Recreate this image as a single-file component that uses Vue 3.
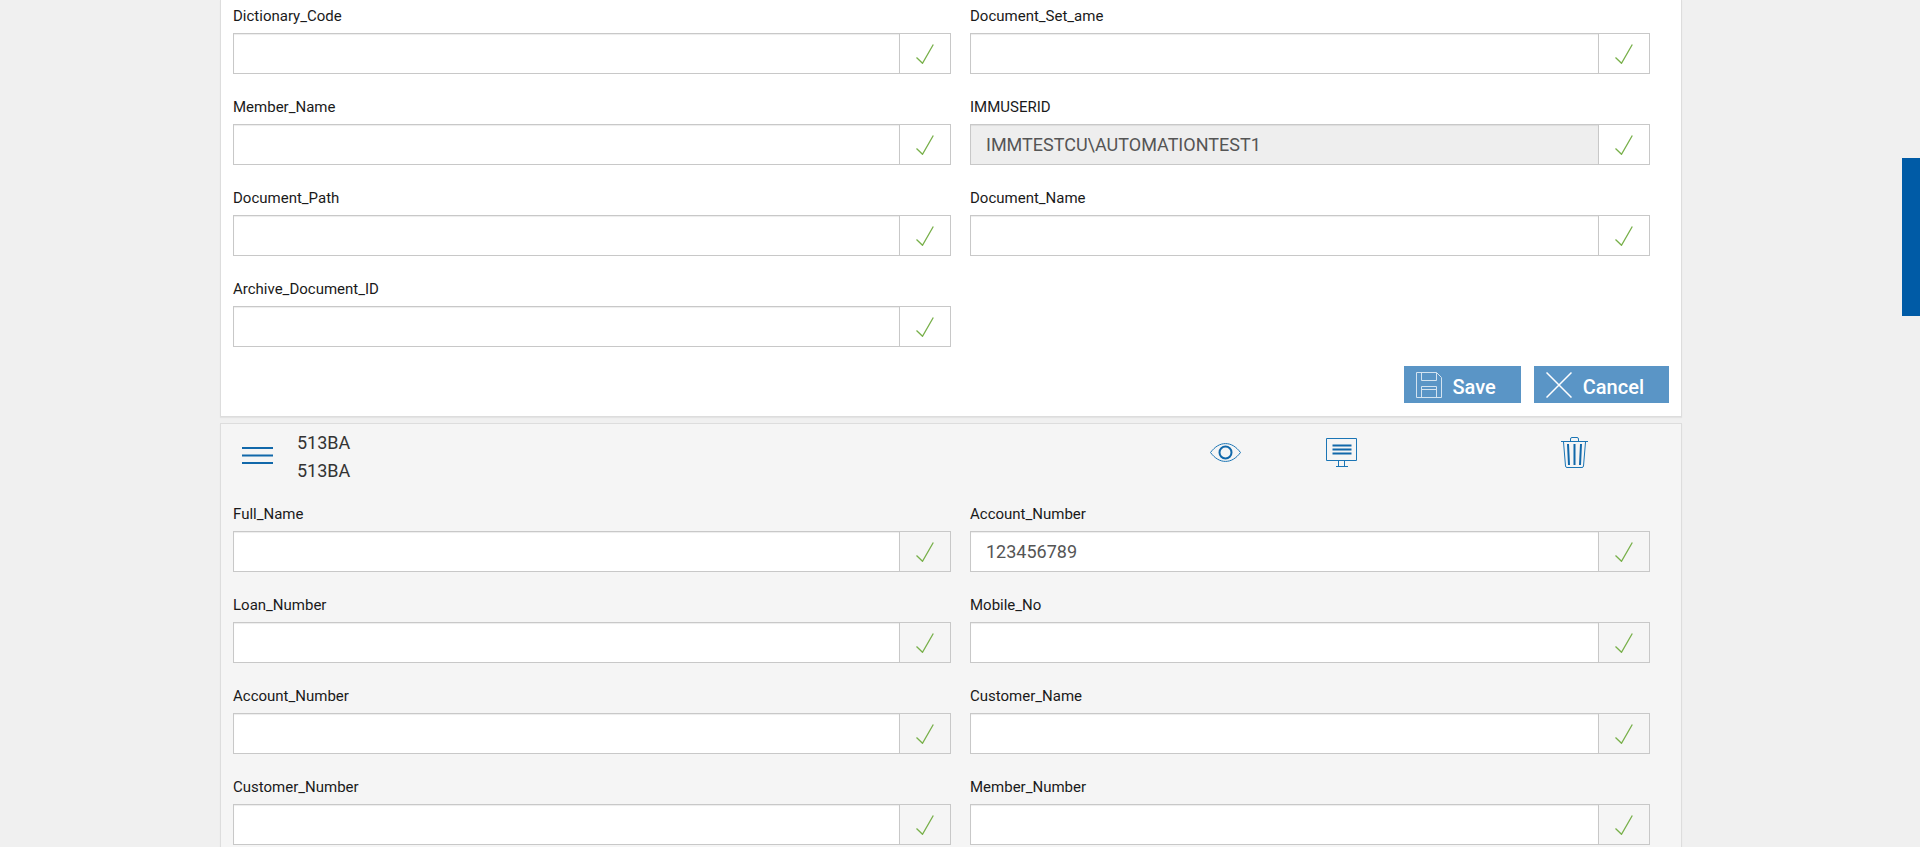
<script setup>
import { reactive } from 'vue'

const field = (id, label, value = '', readonly = false) => ({ id, label, value, readonly })

const openFields = reactive([
  field('dictionary-code', 'Dictionary_Code'),
  field('document-set', 'Document_Set_ame'),
  field('member-name', 'Member_Name'),
  field('imm-user-id', 'IMMUSERID', 'IMMTESTCU\\AUTOMATIONTEST1', true),
  field('document-path', 'Document_Path'),
  field('document-name', 'Document_Name'),
  field('archive-id', 'Archive_Document_ID'),
])

const nextFields = reactive([
  field('full-name', 'Full_Name'),
  field('account-number', 'Account_Number', '123456789'),
  field('loan-number', 'Loan_Number'),
  field('mobile-no', 'Mobile_No'),
  field('account-number-2', 'Account_Number'),
  field('customer-name', 'Customer_Name'),
  field('customer-number', 'Customer_Number'),
  field('member-number', 'Member_Number'),
])
</script>

<template>
  <main class="page">
    <section class="panel panel-open">
      <div class="fields">
        <div v-for="f in openFields" :key="f.id" class="field">
          <label :for="f.id">{{ f.label }}</label>
          <div class="group">
            <input :id="f.id" v-model="f.value" type="text" :readonly="f.readonly" />
            <span class="addon">
              <svg width="18" height="20" viewBox="0 0 18 20"><path d="M.5 13.5 6.5 19.3 17.3.5" /></svg>
            </span>
          </div>
        </div>
      </div>
      <div class="actions">
        <button type="button" class="btn">
          <svg width="26" height="26" viewBox="0 0 26 26">
            <path d="M.5.5H20.5L25.5 5.5V25.5H.5ZM5.5.5V8.5H20.5V.5M5.5 25.5V14.5H20.5V25.5M6 17.5H20" />
          </svg>
          <span>Save</span>
        </button>
        <button type="button" class="btn">
          <svg width="26" height="26" viewBox="0 0 26 26"><path class="cross" d="M.5.5 25.5 25.5M25.5.5.5 25.5" /></svg>
          <span>Cancel</span>
        </button>
      </div>
    </section>

    <section class="panel panel-next">
      <header class="head">
        <button type="button" class="icon-btn handle" aria-label="Reorder">
          <svg width="31" height="17" viewBox="0 0 31 17">
            <path class="bar" d="M0 1H31M0 8.5H31M0 16H31" />
          </svg>
        </button>
        <div class="title">
          <div>513BA</div>
          <div>513BA</div>
        </div>
        <div class="tools">
          <button type="button" class="icon-btn" aria-label="Preview">
            <svg width="31" height="32" viewBox="0 0 31 32">
              <path d="M.5 15.5C5 9.5 10 6.6 15.5 6.6S26 9.5 30.5 15.5C26 21.5 21 24.4 15.5 24.4S5 21.5.5 15.5Z" />
              <circle class="bold" cx="15.5" cy="15.5" r="6" />
            </svg>
          </button>
          <button type="button" class="icon-btn" aria-label="Present">
            <svg width="31" height="32" viewBox="0 0 31 32">
              <path d="M.5 1.5H30.5V23.5H.5ZM12.5 23.5V29M18.5 23.5V29M10 29.5H22" />
              <path class="bold" d="M6.5 8.5H25.5M6.5 12.5H25.5M6.5 16.5H25.5" />
            </svg>
          </button>
          <button type="button" class="icon-btn" aria-label="Delete">
            <svg width="27" height="32" viewBox="0 0 27 32">
              <path d="M0 4.5H27M9.5 4.5V2Q9.5 .5 11 .5H16Q17.5 .5 17.5 2V4.5M2.5 5 4.5 29Q4.7 30.5 6 30.5H21Q22.3 30.5 22.5 29L24.5 5" />
              <path class="bold" d="M7 7 8 28M13.5 7V28M20 7 19 28" />
            </svg>
          </button>
        </div>
      </header>
      <div class="fields">
        <div v-for="f in nextFields" :key="f.id" class="field">
          <label :for="f.id">{{ f.label }}</label>
          <div class="group">
            <input :id="f.id" v-model="f.value" type="text" :readonly="f.readonly" />
            <span class="addon">
              <svg width="18" height="20" viewBox="0 0 18 20"><path d="M.5 13.5 6.5 19.3 17.3.5" /></svg>
            </span>
          </div>
        </div>
      </div>
    </section>

    <button type="button" class="side-tab" aria-label="Open side panel"></button>
  </main>
</template>

<style>
body {
  margin: 0;
  background: #f0f0f0;
}
</style>

<style scoped>
* {
  box-sizing: border-box;
}
.page {
  display: flex;
  flex-direction: column;
  gap: 6px;
  min-height: 100vh;
  padding: 0 238px 0 220px;
  background: #f0f0f0;
  color: #1a1a1a;
  font-family: Roboto, "Liberation Sans", sans-serif;
}
.panel {
  border: 1px solid #ddd;
  box-shadow: 0 1px 1px rgba(0, 0, 0, 0.05);
}
.panel-open {
  border-top: 0;
  padding: 6px 0 13px;
  background: #fff;
}
.panel-next {
  flex: 1;
  border-bottom: 0;
  background: #f5f5f5;
}
.fields {
  display: grid;
  grid-template-columns: 718fr 680fr;
  gap: 23px 19px;
  padding: 0 31px 0 12px;
}
label {
  display: block;
  margin-bottom: 7px;
  font-size: 15px;
  line-height: 20px;
}
.group {
  display: flex;
  height: 41px;
}
input {
  flex: 1;
  min-width: 0;
  padding: 0 15px;
  border: 1px solid #c8c8c8;
  border-right: 0;
  border-radius: 0;
  outline: 0;
  background: #fff;
  box-shadow: inset 0 1px 1px rgba(0, 0, 0, 0.075);
  color: #555;
  font: 18px Roboto, "Liberation Sans", sans-serif;
}
input[readonly] {
  background: #eee;
}
.addon {
  display: flex;
  align-items: center;
  justify-content: center;
  width: 52px;
  border: 1px solid #c8c8c8;
}
svg {
  display: block;
  fill: none;
}
.addon path {
  stroke: #78b04a;
  stroke-width: 1.3;
}
.actions {
  display: flex;
  justify-content: flex-end;
  gap: 13px;
  margin-top: 19px;
  padding-right: 12px;
}
.btn {
  display: flex;
  align-items: flex-start;
  gap: 11px;
  height: 37px;
  padding: 6px 25px 0 12px;
  border: 0;
  background: #5a95c6;
  color: #fff;
  font: 500 20px/30px Roboto, "Liberation Sans", sans-serif;
}
.btn path {
  stroke: #d3e3f0;
}
.btn .cross {
  stroke: #fff;
  stroke-width: 1.5;
}
.head {
  display: flex;
  align-items: flex-start;
  padding: 5px 0 19px 21px;
}
.icon-btn {
  padding: 0;
  border: 0;
  background: none;
}
.icon-btn path,
.icon-btn circle {
  stroke: #1b75b5;
}
.icon-btn .bold,
.icon-btn .bar {
  stroke: #1168aa;
  stroke-width: 2;
}
.handle {
  margin-top: 18px;
}
.title {
  margin-left: 24px;
  color: #333;
  font-size: 18px;
  line-height: 28px;
}
.tools {
  display: grid;
  grid-template-columns: 116px 235px 120px;
  justify-items: start;
  margin: 8px 0 0 auto;
}
.side-tab {
  position: fixed;
  top: 158px;
  right: 0;
  width: 18px;
  height: 158px;
  padding: 0;
  border: 0;
  background: #005ba6;
}
</style>
